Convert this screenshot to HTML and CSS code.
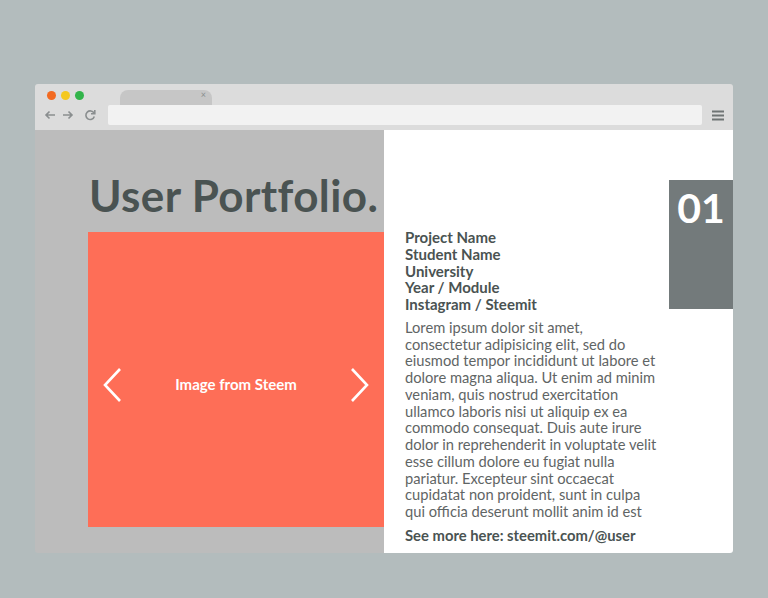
FILE: index.html
```html
<!DOCTYPE html>
<html>
<head>
   <meta charset="utf-8" />
   <title>User Portfolio</title>
   <link rel="stylesheet" href="styles.css">
</head>
<body>
   <div class="browser">
       <div class="toolbar">
           <div class="tab-row">
               <span class="dot dot-red"></span>
               <span class="dot dot-yellow"></span>
               <span class="dot dot-green"></span>
               <div class="tab"><span class="tab-close">&times;</span></div>
           </div>
           <div class="nav-row">
               <div class="nav-icons">
                   <svg width="12" height="10" viewBox="0 0 12 10"><path d="M11 5H2M5.5 1.5L2 5l3.5 3.5" fill="none" stroke="#8a8e8f" stroke-width="1.6"/></svg>
                   <svg width="12" height="10" viewBox="0 0 12 10"><path d="M1 5h9M6.5 1.5L10 5 6.5 8.5" fill="none" stroke="#8a8e8f" stroke-width="1.6"/></svg>
                   <svg class="reload" width="12" height="12" viewBox="0 0 12 12"><path d="M10 4.2A4.3 4.3 0 1 0 10.3 7.5" fill="none" stroke="#8a8e8f" stroke-width="1.6"/><path d="M10.8 1v3.8H7" fill="none" stroke="#8a8e8f" stroke-width="1.6"/></svg>
               </div>
               <div class="address"></div>
               <svg class="menu" width="12" height="11" viewBox="0 0 12 11"><path d="M0 1.5h12M0 5.5h12M0 9.5h12" stroke="#6f7474" stroke-width="2"/></svg>
           </div>
       </div>
       <div class="page">
           <div class="left">
               <h1 class="title">User Portfolio.</h1>
               <div class="slider">
                   <svg class="arrow" width="20" height="36" viewBox="0 0 20 36"><path d="M18 2L3 18l15 16" fill="none" stroke="#fff" stroke-width="2.6"/></svg>
                   <span class="slide-label">Image from Steem</span>
                   <svg class="arrow" width="20" height="36" viewBox="0 0 20 36"><path d="M2 2l15 16L2 34" fill="none" stroke="#fff" stroke-width="2.6"/></svg>
               </div>
           </div>
           <div class="right">
               <div class="info">
                   <div class="meta">
                       <div>Project Name</div>
                       <div>Student Name</div>
                       <div>University</div>
                       <div>Year / Module</div>
                       <div>Instagram / Steemit</div>
                   </div>
                   <p class="desc">Lorem ipsum dolor sit amet, consectetur adipisicing elit, sed do eiusmod tempor incididunt ut labore et dolore magna aliqua. Ut enim ad minim veniam, quis nostrud exercitation ullamco laboris nisi ut aliquip ex ea commodo consequat. Duis aute irure dolor in reprehenderit in voluptate velit esse cillum dolore eu fugiat nulla pariatur. Excepteur sint occaecat cupidatat non proident, sunt in culpa qui officia deserunt mollit anim id est</p>
                   <div class="more">See more here: steemit.com/@user</div>
               </div>
               <div class="number">01</div>
           </div>
       </div>
   </div>
</body>
</html>
```

FILE: styles.css
```css
body, html {
    margin: 0;
    height: 100%;
}
body {
    background-color: #b3bcbd;
    padding: 84px 35px 0 35px;
    box-sizing: border-box;
    font-family: Lato, "Open Sans", sans-serif;
}
.browser {
    width: 698px;
    height: 469px;
    display: flex;
    flex-direction: column;
    border-radius: 3px;
    overflow: hidden;
}
.toolbar {
    flex-shrink: 0;
    background-color: #dcdcdc;
    height: 46px;
    box-sizing: border-box;
    padding: 6px 9px 0 12px;
}
.tab-row {
    display: flex;
    align-items: flex-start;
    height: 15px;
    gap: 5px;
}
.dot {
    width: 9px;
    height: 9px;
    border-radius: 50%;
    margin-top: 1px;
}
.dot-red { background-color: #f26a21; }
.dot-yellow { background-color: #f4c81f; }
.dot-green { background-color: #32b44a; }
.tab {
    margin-left: 31px;
    width: 92px;
    height: 15px;
    background-color: #c6c6c6;
    border-radius: 8px 8px 0 0;
    position: relative;
}
.tab-close {
    position: absolute;
    right: 6px;
    top: -1px;
    font-size: 9px;
    color: #8a8e8f;
}
.nav-row {
    display: flex;
    align-items: center;
    height: 20px;
    margin-left: -3px;
}
.nav-icons {
    display: flex;
    align-items: center;
    gap: 6px;
    width: 64px;
}
.reload {
    margin-left: 4px;
}
.address {
    width: 594px;
    height: 20px;
    background-color: #f2f2f2;
    border-radius: 2px;
}
.menu {
    margin-left: 10px;
}
.page {
    flex: 1;
    min-height: 0;
    display: flex;
}
.left {
    width: 349px;
    background-color: #bcbcbc;
    padding-left: 53px;
    box-sizing: border-box;
}
.title {
    margin: 41px 0 0 1px;
    font-size: 44px;
    line-height: 48px;
    font-weight: 700;
    color: #4a5352;
    letter-spacing: 0.4px;
    white-space: nowrap;
}
.slider {
    margin-top: 13px;
    height: 295px;
    background-color: #fe6e57;
    display: flex;
    align-items: center;
    justify-content: space-between;
    padding: 0 14px;
}
.arrow {
    margin-top: 10px;
}
.slide-label {
    color: #fff;
    font-weight: 700;
    font-size: 15px;
    margin-top: 8px;
}
.right {
    width: 349px;
    background-color: #fff;
    display: flex;
    padding-left: 21px;
    box-sizing: border-box;
}
.info {
    width: 254px;
    padding-top: 99px;
    margin-right: 10px;
    color: #4a5352;
}
.meta {
    font-weight: 700;
    font-size: 15px;
    line-height: 16.75px;
}
.desc {
    margin: 6px 0 0 0;
    font-size: 14.7px;
    line-height: 16.75px;
    color: #5f6565;
}
.more {
    margin-top: 7px;
    font-weight: 700;
    font-size: 14.8px;
    line-height: 16.75px;
}
.number {
    margin-top: 50px;
    width: 64px;
    height: 129px;
    background-color: #737a7b;
    color: #fff;
    font-weight: 700;
    font-size: 41px;
    line-height: 56px;
    text-align: center;
}
```
